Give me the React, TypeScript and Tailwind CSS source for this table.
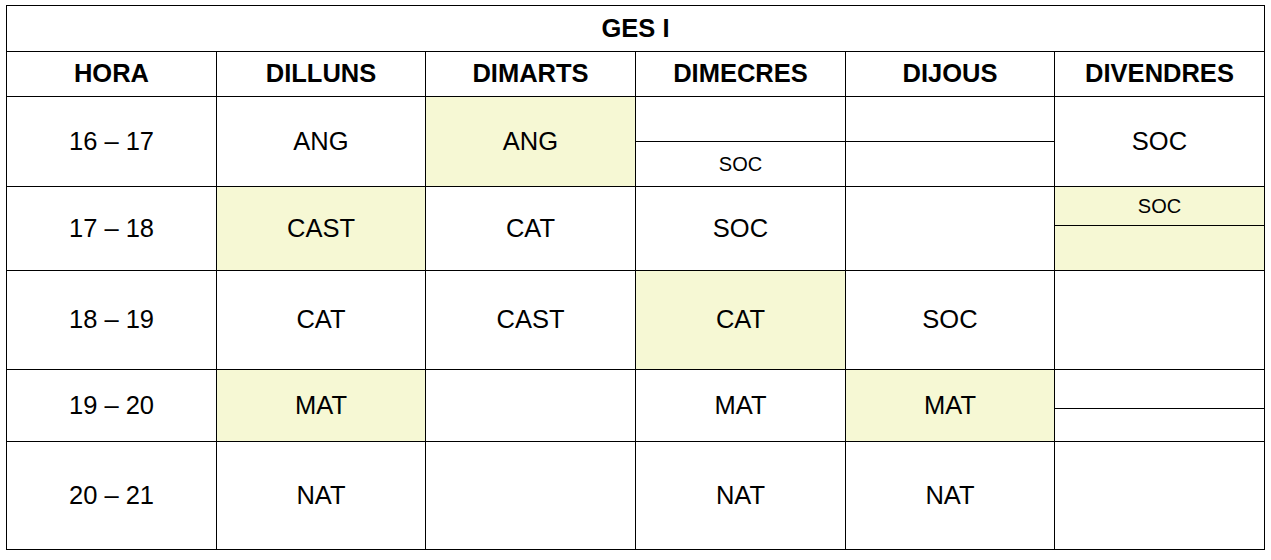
import React from "react";

const hl = "bg-[#f6f8d4]";

const Cell: React.FC<{
  className?: string;
  small?: boolean;
  bold?: boolean;
  children?: React.ReactNode;
}> = ({ className = "", small, bold, children }) => (
  <div
    className={`flex items-center justify-center ${
      small ? "text-[20px]" : "text-[25.5px]"
    } ${bold ? "font-bold" : ""} ${className.includes("bg-") ? "" : "bg-white"} ${className}`}
  >
    {children}
  </div>
);

const App: React.FC = () => {
  return (
    <div
      className="min-h-screen bg-white pt-[5px] pl-[6px] text-black leading-none"
      style={{ fontFamily: '"Liberation Sans", Arial, sans-serif' }}
    >
      <div className="inline-grid bg-black p-px gap-px grid-cols-[209px_208px_209px_209px_208px_209px] grid-rows-[45px_44px_44px_44px_38px_44px_98px_38px_32px_107px]">
        {/* title */}
        <Cell bold className="col-span-6">GES I</Cell>

        {/* day headers */}
        <Cell bold>HORA</Cell>
        <Cell bold>DILLUNS</Cell>
        <Cell bold>DIMARTS</Cell>
        <Cell bold>DIMECRES</Cell>
        <Cell bold>DIJOUS</Cell>
        <Cell bold>DIVENDRES</Cell>

        {/* 16 - 17 */}
        <Cell className="row-span-2">16 – 17</Cell>
        <Cell className="row-span-2">ANG</Cell>
        <Cell className={`row-span-2 ${hl}`}>ANG</Cell>
        <Cell />
        <Cell />
        <Cell className="row-span-2">SOC</Cell>
        <Cell small>SOC</Cell>
        <Cell />

        {/* 17 - 18 */}
        <Cell className="row-span-2">17 – 18</Cell>
        <Cell className={`row-span-2 ${hl}`}>CAST</Cell>
        <Cell className="row-span-2">CAT</Cell>
        <Cell className="row-span-2">SOC</Cell>
        <Cell className="row-span-2" />
        <Cell small className={hl}>SOC</Cell>
        <Cell className={hl} />

        {/* 18 - 19 */}
        <Cell>18 – 19</Cell>
        <Cell>CAT</Cell>
        <Cell>CAST</Cell>
        <Cell className={hl}>CAT</Cell>
        <Cell>SOC</Cell>
        <Cell />

        {/* 19 - 20 */}
        <Cell className="row-span-2">19 – 20</Cell>
        <Cell className={`row-span-2 ${hl}`}>MAT</Cell>
        <Cell className="row-span-2" />
        <Cell className="row-span-2">MAT</Cell>
        <Cell className={`row-span-2 ${hl}`}>MAT</Cell>
        <Cell />
        <Cell />

        {/* 20 - 21 */}
        <Cell>20 – 21</Cell>
        <Cell>NAT</Cell>
        <Cell />
        <Cell>NAT</Cell>
        <Cell>NAT</Cell>
        <Cell />
      </div>
    </div>
  );
};

export default App;
